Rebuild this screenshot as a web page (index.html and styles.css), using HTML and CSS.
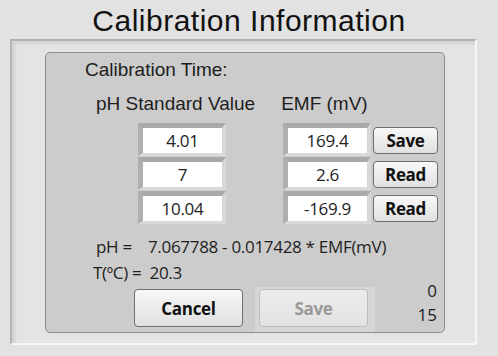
FILE: index.html
```html
<!DOCTYPE html>
<html lang="en">
<head>
    <meta charset="UTF-8">
    <meta name="viewport" content="width=device-width, initial-scale=1.0">
    <title>Calibration Information</title>
    <link rel="stylesheet" href="styles.css">
</head>
<body>
    <h1 class="title">Calibration Information</h1>
    <div class="frame">
        <div class="panel">
            <div class="cal-time">Calibration Time:</div>
            <div class="headers">
                <span class="h-ph">pH Standard Value</span>
                <span class="h-emf">EMF (mV)</span>
            </div>
            <div class="rows">
                <div class="row">
                    <div class="field">4.01</div>
                    <div class="field emf">169.4</div>
                    <button class="btn small">Save</button>
                </div>
                <div class="row">
                    <div class="field">7</div>
                    <div class="field emf">2.6</div>
                    <button class="btn small">Read</button>
                </div>
                <div class="row">
                    <div class="field">10.04</div>
                    <div class="field emf">-169.9</div>
                    <button class="btn small">Read</button>
                </div>
            </div>
            <div class="formula"><span>pH =</span><span class="eq">7.067788 - 0.017428 * EMF(mV)</span></div>
            <div class="temp"><span>T(ºC) =</span><span class="eq">20.3</span></div>
            <div class="footer">
                <button class="btn big">Cancel</button>
                <div class="disabled-wrap">
                    <button class="btn big" disabled>Save</button>
                </div>
                <div class="counts">
                    <span>0</span>
                    <span>15</span>
                </div>
            </div>
        </div>
    </div>
</body>
</html>
```

FILE: styles.css
```css
body {
    margin: 0;
    width: 498px;
    height: 356px;
    background-color: #e2e2e2;
    font-family: "Liberation Sans", Arial, sans-serif;
    color: #1e1e1e;
    overflow: hidden;
}

.title {
    margin: 0;
    padding-top: 3px;
    height: 36px;
    line-height: 36px;
    font-size: 30px;
    font-weight: normal;
    letter-spacing: 0.5px;
    text-align: center;
    color: #111;
}

.frame {
    box-sizing: border-box;
    margin-left: 10px;
    width: 467px;
    height: 306px;
    padding: 11px 0 0 33px;
    border: 2px solid;
    border-color: #b0b0b0 #f6f6f6 #f6f6f6 #b4b4b4;
    box-shadow: inset 3px 3px 3px rgba(0, 0, 0, 0.08);
    background-color: #e4e4e4;
}

.panel {
    box-sizing: border-box;
    width: 400px;
    height: 281px;
    border: 1px solid #8c8c8c;
    border-radius: 5px;
    background-color: #cccccc;
    display: flex;
    flex-direction: column;
}

.cal-time {
    margin-top: 6px;
    padding-left: 39px;
    font-size: 19px;
    line-height: 22px;
}

.headers {
    margin-top: 12px;
    padding-left: 50px;
    font-size: 19px;
    line-height: 22px;
    display: flex;
}

.h-emf {
    margin-left: 26px;
}

.rows {
    margin-top: 8px;
    display: flex;
    flex-direction: column;
    gap: 1px;
}

.row {
    display: flex;
    height: 33px;
    padding-left: 92px;
}

.field {
    box-sizing: border-box;
    width: 88px;
    height: 33px;
    border-style: solid;
    border-width: 5px 4px 3px 5px;
    border-color: #a9a9a9 #d8d8d8 #dadada #afafaf;
    background-color: #fff;
    font-family: "Open Sans", sans-serif;
    font-size: 17px;
    letter-spacing: -0.3px;
    line-height: 25px;
    text-align: center;
    color: #222;
}

.field.emf {
    margin-left: 57px;
}

.btn {
    box-sizing: border-box;
    padding: 0;
    border: 1px solid #6e6e6e;
    border-radius: 4px;
    background: linear-gradient(#f8f8f8, #e0e0e0);
    font-family: "Open Sans", sans-serif;
    font-weight: bold;
    font-size: 17px;
    letter-spacing: -0.3px;
    color: #111;
}

.btn.small {
    width: 65px;
    height: 27px;
    margin: 4px 0 0 2px;
    line-height: 24px;
}

.btn.big {
    width: 109px;
    height: 38px;
}

.btn:disabled {
    border-color: #bdbdbd;
    background: linear-gradient(#ececec, #e2e2e2);
    color: #9a9a9a;
}

.formula,
.temp {
    font-family: "Open Sans", sans-serif;
    font-size: 17px;
    letter-spacing: -0.3px;
    line-height: 20px;
    display: flex;
}

.formula {
    margin-top: 13px;
    padding-left: 50px;
}

.formula .eq {
    margin-left: 16px;
}

.temp {
    margin-top: 6px;
    padding-left: 47px;
}

.temp .eq {
    margin-left: 8px;
}

.footer {
    display: flex;
    padding-left: 88px;
    padding-right: 7px;
    flex: 1;
}

.footer > .btn {
    margin-top: 6px;
}

.disabled-wrap {
    margin: 4px 0 0 12px;
    padding: 2px 7px 0 4px;
    background-color: #d6d6d6;
}

.counts {
    margin: -4px 0 0 auto;
    display: flex;
    flex-direction: column;
    align-items: flex-end;
    font-family: "Open Sans", sans-serif;
    font-size: 17px;
    line-height: 24px;
}
```
